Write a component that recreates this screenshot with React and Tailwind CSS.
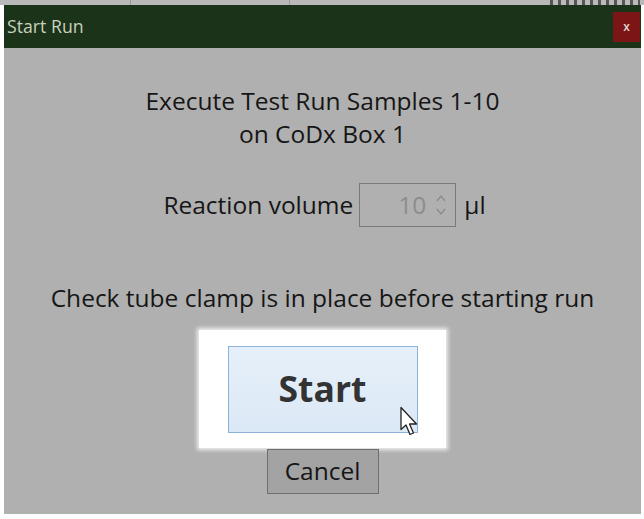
import React from "react";

const font = { fontFamily: '"Open Sans", "Noto Sans", sans-serif' };

const Cursor = () => (
  <svg width="20" height="32" viewBox="0 0 20 31" className="absolute left-[400px] top-[406px]">
    <path
      d="M1 1 L1 23 L6 18.5 L10 28 L13.5 26.5 L9.5 17.5 L16.5 17.5 Z"
      fill="#ffffff"
      stroke="#222222"
      strokeWidth="1.3"
      strokeLinejoin="round"
    />
  </svg>
);

export default function App() {
  return (
    <div className="relative w-[644px] h-[519px] bg-white overflow-hidden" style={font}>
      {/* strip of the window behind */}
      <div className="h-[5px] bg-[#b9b9b9] flex">
        <div className="w-[131px] border-r border-[#9a9a9a]" />
        <div className="w-[159px] border-r border-[#9a9a9a]" />
        <div className="flex-1" />
        <div className="w-[90px] mr-[4px] bg-[repeating-linear-gradient(90deg,#555_0,#555_3px,#bbb_3px,#bbb_8px)]" />
      </div>

      <div className="ml-[4px] mr-[3px] flex flex-col h-[509px]">
        {/* title bar */}
        <div className="h-[43px] bg-[#1b3319] flex items-center justify-between">
          <span className="pl-[3px] text-[17.7px] text-[#c9d1bd] leading-none">Start Run</span>
          <div className="w-[27px] h-[30px] mr-[1px] bg-[#7c1515] flex items-center justify-center text-[#e4d6d6] text-[12px] font-semibold leading-none">
            x
          </div>
        </div>

        {/* body */}
        <div className="flex-1 bg-[#b0b0b0] flex flex-col items-center text-[#161616]">
          <div className="mt-[36px] text-[24.5px] leading-[33px] text-center">
            <div>Execute Test Run Samples 1-10</div>
            <div>on CoDx Box 1</div>
          </div>

          <div className="mt-[33px] flex items-center gap-[6px] text-[24.5px] ml-[4px]">
            <span>Reaction volume</span>
            <div className="w-[97px] h-[44px] border border-[#7a7a7a] flex items-center justify-end pr-[8px] gap-[9px]">
              <span className="text-[#8c8c8c]">10</span>
              <svg width="12" height="28" viewBox="0 0 12 26">
                <path d="M2 9 L6 4 L10 9" fill="none" stroke="#8c8c8c" strokeWidth="1.4" />
                <path d="M2 17 L6 22 L10 17" fill="none" stroke="#8c8c8c" strokeWidth="1.4" />
              </svg>
            </div>
            <span className="ml-[2px]">µl</span>
          </div>

          <div className="mt-[56px] text-[24.5px] leading-[30px]">
            Check tube clamp is in place before starting run
          </div>

          {/* highlighted start button */}
          <div className="mt-[17px] w-[247px] h-[118px] bg-white shadow-[0_0_4px_2px_rgba(255,255,255,0.8)] flex items-center justify-center">
            <button className="w-[190px] h-[87px] border border-[#8cb2d8] bg-[linear-gradient(180deg,#e6f0fa,#dbe8f5)] text-[35.5px] font-bold text-[#333333]">
              Start
            </button>
          </div>

          <button className="mt-[1px] w-[112px] h-[45px] border border-[#6f6f6f] bg-[#a3a3a3] text-[24.5px] text-[#161616]">
            Cancel
          </button>
        </div>
      </div>

      <Cursor />
    </div>
  );
}
